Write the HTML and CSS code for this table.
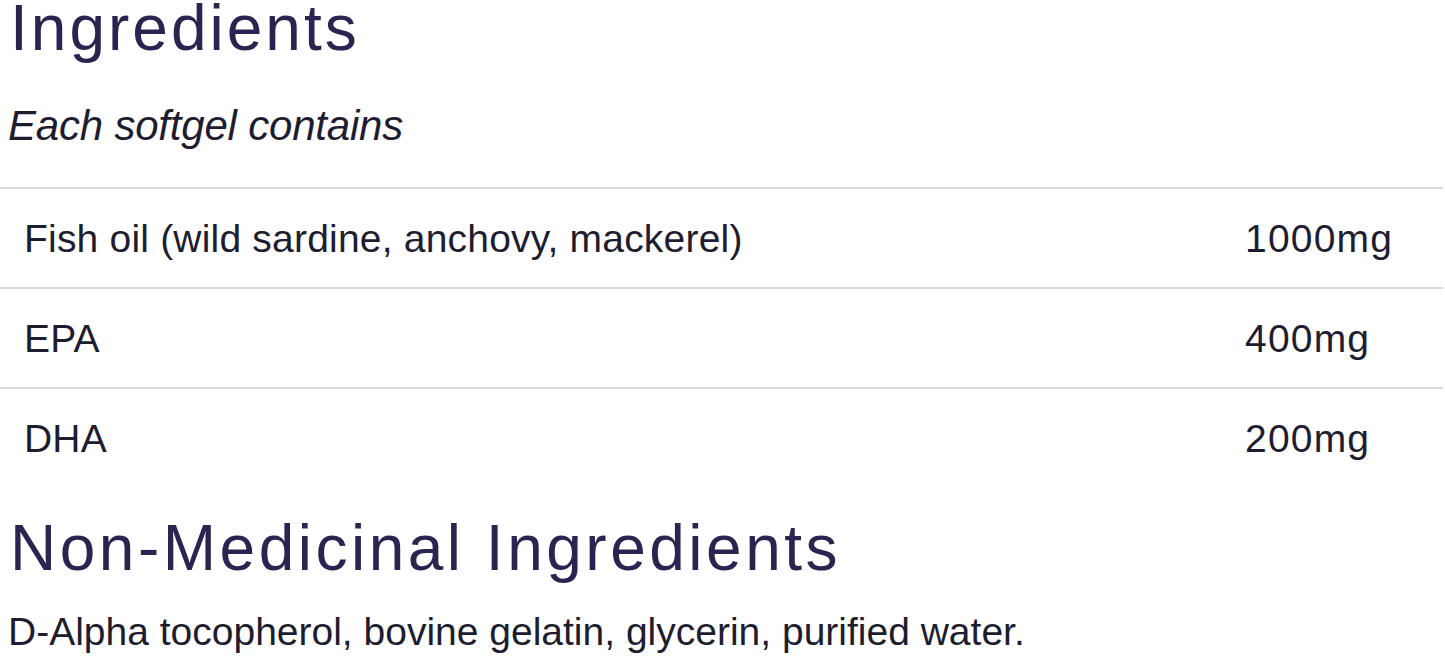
FILE: index.html
```html
<!DOCTYPE html>
<html lang="en">
<head>
    <meta charset="UTF-8">
    <meta name="viewport" content="width=device-width, initial-scale=1.0">
    <title>Ingredients</title>
    <link rel="stylesheet" href="styles.css">
</head>
<body>
    <div class="ingredients">
        <h1 class="title">Ingredients</h1>
        <p class="sub">Each softgel contains</p>
        <div class="list">
            <div class="row"><span class="name">Fish oil (wild sardine, anchovy, mackerel)</span><span class="amount">1000mg</span></div>
            <div class="row"><span class="name">EPA</span><span class="amount">400mg</span></div>
            <div class="row"><span class="name">DHA</span><span class="amount">200mg</span></div>
        </div>
        <h2 class="title title2">Non-Medicinal Ingredients</h2>
        <p class="other">D-Alpha tocopherol, bovine gelatin, glycerin, purified water.</p>
    </div>
</body>
</html>
```

FILE: styles.css
```css
*{
    box-sizing: border-box;
}
html {
    font-family: "Liberation Sans", Arial, Helvetica, sans-serif;
    color: #1e1d30;
}
body {
    margin: 0;
    background: #fff;
}
.ingredients {
    padding-right: 2px;
}
.title {
    margin: 0;
    padding-left: 10px;
    font-size: 64px;
    line-height: 56px;
    font-weight: normal;
    letter-spacing: 3px;
    color: #2a2550;
}
.sub {
    margin: 46px 0 37px;
    padding-left: 8px;
    font-size: 42px;
    line-height: 48px;
    font-style: italic;
    letter-spacing: -0.2px;
}
.row {
    display: flex;
    height: 100px;
    padding-top: 1px;
    border-top: 2px solid #dcdcdc;
    font-size: 39px;
    line-height: 97px;
    letter-spacing: 0.2px;
}
.name {
    flex: 1;
    padding-left: 24px;
}
.amount {
    width: 198px;
    letter-spacing: 1.2px;
}
.title2 {
    margin-top: 33px;
    letter-spacing: 3.5px;
}
.other {
    margin: 34px 0 0;
    padding-left: 8px;
    font-size: 39px;
    line-height: 44px;
}
```
